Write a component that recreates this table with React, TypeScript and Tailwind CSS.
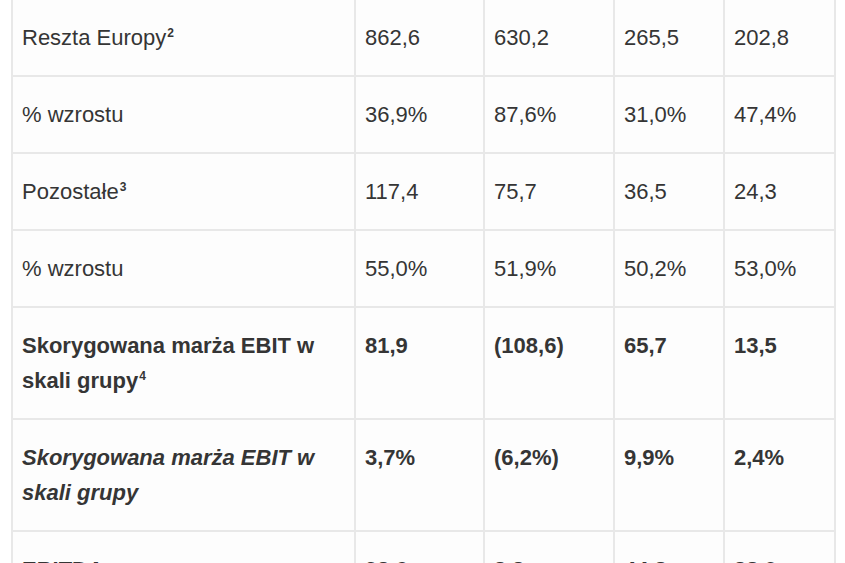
import React from "react";

type Row = {
  label: React.ReactNode;
  values: string[];
  bold?: boolean;
  italicLabel?: boolean;
};

const Sup = ({ n }: { n: string }) => (
  <sup className="text-[12px] font-bold not-italic relative -top-[8px] ml-[1px]">{n}</sup>
);

const rows: Row[] = [
  { label: <>Reszta Europy<Sup n="2" /></>, values: ["862,6", "630,2", "265,5", "202,8"] },
  { label: "% wzrostu", values: ["36,9%", "87,6%", "31,0%", "47,4%"] },
  { label: <>Pozostałe<Sup n="3" /></>, values: ["117,4", "75,7", "36,5", "24,3"] },
  { label: "% wzrostu", values: ["55,0%", "51,9%", "50,2%", "53,0%"] },
  {
    label: <>Skorygowana marża EBIT w<br />skali grupy<Sup n="4" /></>,
    values: ["81,9", "(108,6)", "65,7", "13,5"],
    bold: true,
  },
  {
    label: <>Skorygowana marża EBIT w<br />skali grupy</>,
    values: ["3,7%", "(6,2%)", "9,9%", "2,4%"],
    bold: true,
    italicLabel: true,
  },
  { label: "EBITDA", values: ["93,6", "3,3", "44,8", "38,0"], bold: true },
];

export default function App() {
  return (
    <div className="w-[845px] h-[563px] overflow-hidden bg-white pl-[11px]" style={{ fontFamily: '"Liberation Sans", Arial, sans-serif' }}>
      <table className="-mt-[2px] w-[823px] table-fixed border-collapse text-[22px] leading-[35px] text-[#353535] bg-[#fdfdfd]">
        <colgroup>
          <col className="w-[343px]" />
          <col className="w-[129px]" />
          <col className="w-[130px]" />
          <col className="w-[110px]" />
          <col className="w-[111px]" />
        </colgroup>
        <tbody>
          {rows.map((r, i) => (
            <tr key={i} className={r.bold ? "font-bold" : ""}>
              <td className={`border-2 border-[#e8e8e8] align-top py-[20px] px-[9px] ${r.italicLabel ? "italic" : ""}`}>{r.label}</td>
              {r.values.map((v, j) => (
                <td key={j} className="border-2 border-[#e8e8e8] align-top py-[20px] px-[9px] whitespace-nowrap">
                  {v}
                </td>
              ))}
            </tr>
          ))}
        </tbody>
      </table>
    </div>
  );
}
